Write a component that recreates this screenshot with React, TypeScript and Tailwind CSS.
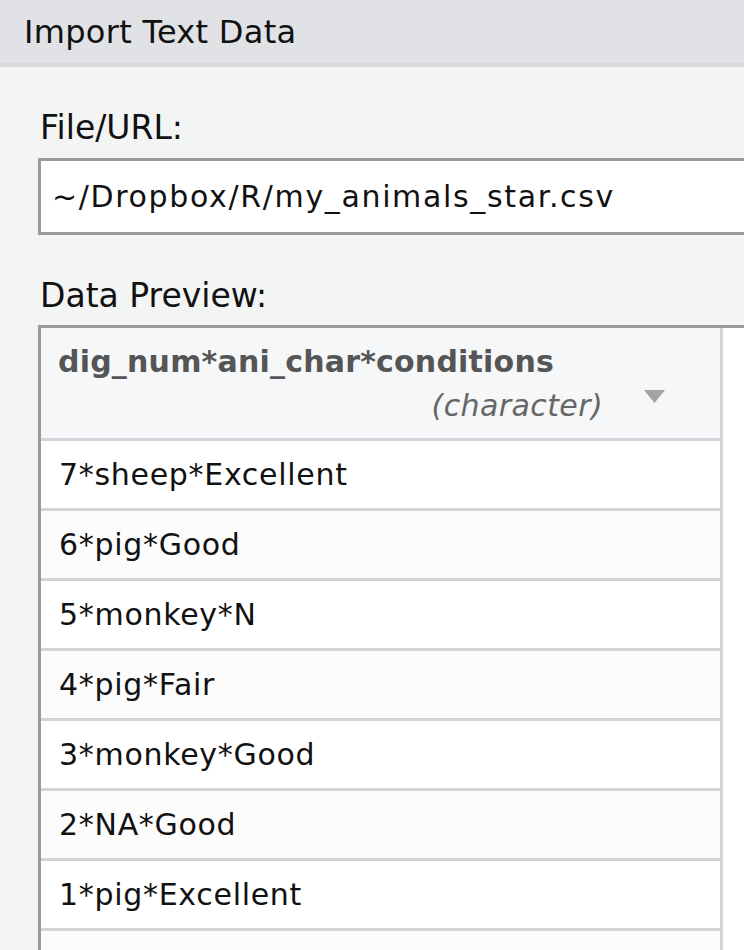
import React from "react";

const rows = [
  "7*sheep*Excellent",
  "6*pig*Good",
  "5*monkey*N",
  "4*pig*Fair",
  "3*monkey*Good",
  "2*NA*Good",
  "1*pig*Excellent",
  "",
];

export default function App() {
  return (
    <div
      className="w-[744px] h-[950px] overflow-hidden bg-[#f3f4f4] text-[#111]"
      style={{ fontFamily: '"DejaVu Sans", sans-serif' }}
    >
      <div className="h-[67px] bg-[#e1e2e6] border-b-4 border-[#d6d8db] pl-[24px] flex items-center">
        <span className="text-[32px] leading-none tracking-[0.3px]">Import Text Data</span>
      </div>

      <div className="pl-[38px]">
        <div className="pl-[2px] pt-[44px] text-[33px] leading-[33px] h-[91px]">File/URL:</div>
        <div className="h-[77px] border-[3px] border-r-0 border-[#9a9a9a] bg-white flex items-center pl-[11px]">
          <span className="text-[30px] leading-none tracking-[1.65px]">~/Dropbox/R/my_animals_star.csv</span>
        </div>
        <div className="pl-[2px] pt-[44px] text-[33px] leading-[33px] h-[90px]">Data Preview:</div>
        <div className="border-t-[3px] border-l-[3px] border-[#9a9a9a] bg-white flex">
          <div className="w-[682px] border-r-[3px] border-[#d1d5d9]">
            <div className="h-[113px] bg-[#f6f7f8] border-b-[3px] border-[#d1d5d9] relative">
              <div className="absolute left-[17px] top-[19px] text-[30px] font-bold text-[#555] leading-none tracking-[0.2px]">
                dig_num*ani_char*conditions
              </div>
              <div className="absolute right-[117px] top-[63px] text-[30px] italic text-[#666] leading-none tracking-[0.4px]">
                (character)
              </div>
              <svg className="absolute left-[603px] top-[62px]" width="21" height="13" viewBox="0 0 21 13">
                <polygon points="0,0 21,0 10.5,13" fill="#a3a3a3" />
              </svg>
            </div>
            {rows.map((r, i) => (
              <div
                key={i}
                className={`h-[70px] border-b-[3px] border-[#d1d5d9] flex items-center pl-[18px] ${
                  i % 2 === 1 ? "bg-[#fcfcfc]" : "bg-white"
                }`}
              >
                <span className="text-[30px] leading-none tracking-[0.7px]">{r}</span>
              </div>
            ))}
          </div>
          <div className="flex-1 bg-white" />
        </div>
      </div>
    </div>
  );
}
